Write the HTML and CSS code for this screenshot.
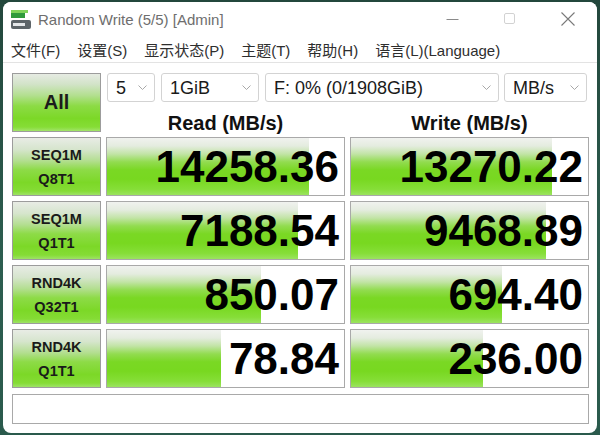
FILE: index.html
```html
<!DOCTYPE html>
<html>
<head>
<meta charset="utf-8">
<link rel="stylesheet" href="styles.css">
</head>
<body>
<div class="window">
  <div class="titlebar">
    <svg class="app-icon" width="21" height="20" viewBox="0 0 21 20">
      <rect x="0" y="0" width="17" height="3" fill="#7fd35a"/>
      <rect x="0" y="3" width="14" height="5" fill="#2f9a3c"/>
      <rect x="0" y="10" width="20" height="9" rx="2" fill="#5d6468"/>
      <rect x="2" y="13" width="12" height="3" fill="#e4e6e8"/>
    </svg>
    <span class="title">Random Write (5/5) [Admin]</span>
    <div class="controls">
      <span class="ctl"><svg width="13" height="13" viewBox="0 0 13 13"><line x1="0.5" y1="6.5" x2="12.5" y2="6.5" stroke="#8a8a8a" stroke-width="1"/></svg></span>
      <span class="ctl"><svg width="12" height="12" viewBox="0 0 12 12"><rect x="0.5" y="0.5" width="10" height="10" rx="1.5" fill="none" stroke="#d2d2d2" stroke-width="1"/></svg></span>
      <span class="ctl"><svg width="14" height="14" viewBox="0 0 14 14"><path d="M0.5 0.5 L13.5 13.5 M13.5 0.5 L0.5 13.5" stroke="#7a7a7a" stroke-width="1.1"/></svg></span>
    </div>
  </div>
  <div class="menubar">
    <span>文件(F)</span>
    <span>设置(S)</span>
    <span>显示状态(P)</span>
    <span>主题(T)</span>
    <span>帮助(H)</span>
    <span>语言(L)(Language)</span>
  </div>
  <div class="content">
    <div class="grid">
      <div class="all">All</div>
      <div class="selects">
        <div class="select s-count"><span>5</span><svg class="chev" width="9" height="5" viewBox="0 0 9 5"><polyline points="0.5,0.5 4.5,4.5 8.5,0.5" fill="none" stroke="#a8a8a8" stroke-width="1"/></svg></div>
        <div class="select s-size"><span>1GiB</span><svg class="chev" width="9" height="5" viewBox="0 0 9 5"><polyline points="0.5,0.5 4.5,4.5 8.5,0.5" fill="none" stroke="#a8a8a8" stroke-width="1"/></svg></div>
        <div class="select s-drive"><span>F: 0% (0/1908GiB)</span><svg class="chev" width="9" height="5" viewBox="0 0 9 5"><polyline points="0.5,0.5 4.5,4.5 8.5,0.5" fill="none" stroke="#a8a8a8" stroke-width="1"/></svg></div>
        <div class="select s-unit"><span>MB/s</span><svg class="chev" width="9" height="5" viewBox="0 0 9 5"><polyline points="0.5,0.5 4.5,4.5 8.5,0.5" fill="none" stroke="#a8a8a8" stroke-width="1"/></svg></div>
      </div>
      <div class="head">Read (MB/s)</div>
      <div class="head">Write (MB/s)</div>

      <div class="label">SEQ1M<br>Q8T1</div>
      <div class="cell"><div class="fill" style="width:85.4%"></div><span class="val">14258.36</span></div>
      <div class="cell"><div class="fill" style="width:84.8%"></div><span class="val">13270.22</span></div>

      <div class="label">SEQ1M<br>Q1T1</div>
      <div class="cell"><div class="fill" style="width:80.4%"></div><span class="val">7188.54</span></div>
      <div class="cell"><div class="fill" style="width:82.4%"></div><span class="val">9468.89</span></div>

      <div class="label">RND4K<br>Q32T1</div>
      <div class="cell"><div class="fill" style="width:65.1%"></div><span class="val">850.07</span></div>
      <div class="cell"><div class="fill" style="width:63.7%"></div><span class="val">694.40</span></div>

      <div class="label">RND4K<br>Q1T1</div>
      <div class="cell"><div class="fill" style="width:48.1%"></div><span class="val">78.84</span></div>
      <div class="cell"><div class="fill" style="width:55.6%"></div><span class="val">236.00</span></div>
    </div>
    <div class="status"></div>
  </div>
</div>
</body>
</html>
```
FILE: styles.css
```css
html, body {
  margin: 0;
  padding: 0;
}
body {
  width: 600px;
  height: 435px;
  background: linear-gradient(180deg, #23473c 0%, #2d5e50 60%, #2a5a4c 100%);
  overflow: hidden;
  font-family: "Liberation Sans", "Noto Sans CJK SC", sans-serif;
}
.window {
  margin: 2px 0 0 3px;
  width: 594px;
  height: 431px;
  background: #ffffff;
  border-radius: 8px;
  overflow: hidden;
  box-sizing: border-box;
  display: flex;
  flex-direction: column;
}
.titlebar {
  height: 34px;
  display: flex;
  align-items: center;
  padding-left: 8px;
  background: #ffffff;
}
.app-icon {
  display: block;
  margin-right: 6px;
  margin-top: 1px;
}
.title {
  font-size: 15px;
  color: #6e6e6e;
  flex: 1;
}
.controls {
  display: flex;
  height: 100%;
}
.ctl {
  width: 58px;
  display: flex;
  align-items: center;
  justify-content: center;
}
.ctl svg { display: block; }
.menubar {
  height: 26px;
  display: flex;
  align-items: center;
  gap: 17px;
  padding-left: 8px;
  font-size: 15px;
  color: #2e2e2e;
  border-bottom: 1px solid #e3e3e3;
}
.content {
  padding: 10px 0 0 9px;
}
.grid {
  display: grid;
  grid-template-columns: 89px 239px 239px;
  grid-template-rows: 29px 25px 59px 59px 59px 59px;
  column-gap: 5px;
  row-gap: 5px;
}
.all {
  grid-row: 1 / 3;
  grid-column: 1;
  border: 1px solid #9c9c9c;
  background: linear-gradient(180deg, #e6ebe3 0%, #d2e3c8 18%, #b2df8e 38%, #8cdb45 56%, #7cd827 78%, #86dd36 93%, #a2e46a 100%);
  display: flex;
  align-items: center;
  justify-content: center;
  font-weight: bold;
  font-size: 20px;
  color: #1c1c1c;
}
.selects {
  grid-row: 1;
  grid-column: 2 / 4;
  display: flex;
  gap: 6px;
  padding-left: 1px;
}
.select {
  height: 29px;
  box-sizing: border-box;
  border: 1px solid #d3d3d3;
  border-radius: 3px;
  background: #fff;
  display: flex;
  align-items: center;
  justify-content: space-between;
  padding: 1px 7px 0 8px;
  font-size: 18px;
  color: #1a1a1a;
}
.chev { display: block; margin-top: -2px; }
.s-count { width: 48px; }
.s-size { width: 98px; }
.s-drive { width: 234px; }
.s-unit { width: 83px; margin-left: -1px; }
.head {
  grid-row: 2;
  text-align: center;
  font-weight: bold;
  font-size: 20px;
  line-height: 20px;
  padding-top: 6px;
  color: #111;
}
.label {
  border: 1px solid #9c9c9c;
  background: linear-gradient(180deg, #e8ece5 0%, #d6e5cd 20%, #b3de90 40%, #8ddb47 56%, #7cd827 78%, #85dc35 93%, #9ee266 100%);
  display: flex;
  align-items: center;
  justify-content: center;
  text-align: center;
  font-weight: bold;
  font-size: 14.5px;
  line-height: 24.5px;
  color: #1a1a1a;
  padding-top: 1px;
}
.cell {
  position: relative;
  border: 1px solid #a9a9a9;
  background: #ffffff;
  display: flex;
  align-items: center;
  justify-content: flex-end;
  overflow: hidden;
}
.fill {
  position: absolute;
  left: 0;
  top: 0;
  bottom: 0;
  background: linear-gradient(180deg, #f0f2ef 0%, #e4ecdf 14%, #c2e4a6 28%, #92dc50 42%, #7ad824 56%, #78d820 72%, #86de38 90%, #9be35f 100%);
}
.val {
  position: relative;
  font-weight: bold;
  font-size: 44px;
  line-height: 44px;
  color: #000;
  padding-right: 5px;
  padding-top: 1px;
}
.status {
  margin-top: 6px;
  width: 577px;
  height: 30px;
  box-sizing: border-box;
  border: 1px solid #a9a9a9;
  background: #fff;
}
```
